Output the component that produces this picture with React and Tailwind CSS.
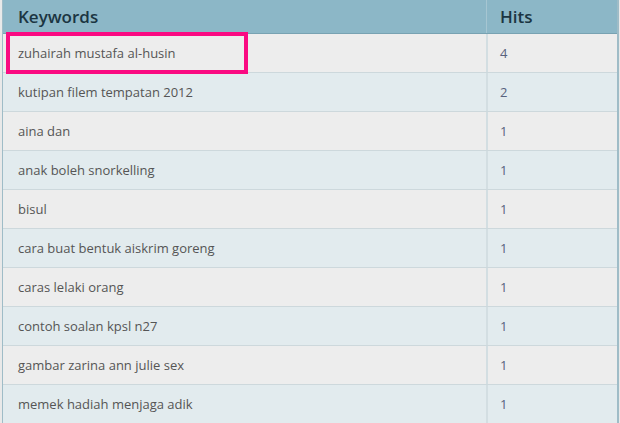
import React from 'react';

const rows = [
  ['zuhairah mustafa al-husin', 4],
  ['kutipan filem tempatan 2012', 2],
  ['aina dan', 1],
  ['anak boleh snorkelling', 1],
  ['bisul', 1],
  ['cara buat bentuk aiskrim goreng', 1],
  ['caras lelaki orang', 1],
  ['contoh soalan kpsl n27', 1],
  ['gambar zarina ann julie sex', 1],
  ['memek hadiah menjaga adik', 1],
];

export default function App() {
  return (
    <div className="w-[620px] h-[423px] overflow-hidden bg-[#e9e9e9] pl-[2px] font-['Open_Sans',sans-serif]">
      <div className="relative w-[617px] border-l border-r-2 border-[#9fbcc7]">
        {/* Header */}
        <div className="flex h-[34px] bg-[#8cb7c7] border-b border-[#78a2b2]">
          <div className="w-[483px] pl-[15px] flex items-center text-[17px] font-semibold text-[#1b3542]">
            Keywords
          </div>
          <div className="flex-1 border-l border-[#a6c6d2] pl-[13px] flex items-center text-[17px] font-semibold text-[#1b3542]">
            Hits
          </div>
        </div>

        {/* Rows */}
        {rows.map(([keyword, hits], i) => (
          <div
            key={keyword}
            className={`flex h-[39px] border-b border-[#cdd8dc] ${i % 2 === 0 ? 'bg-[#ededed]' : 'bg-[#e2ebee]'}`}
          >
            <div className="w-[483px] pl-[15px] pt-[2px] flex items-center text-[13px] text-[#555555]">
              {keyword}
            </div>
            <div className="flex-1 border-l-2 border-[#d3dee2] pl-[12px] pt-[2px] flex items-center text-[13px] text-[#58627e]">
              {hits}
            </div>
          </div>
        ))}

        {/* Highlight box */}
        <div className="absolute left-[3px] top-[32px] w-[242px] h-[42px] border-4 border-[#fa0a82]" />
      </div>
    </div>
  );
}
